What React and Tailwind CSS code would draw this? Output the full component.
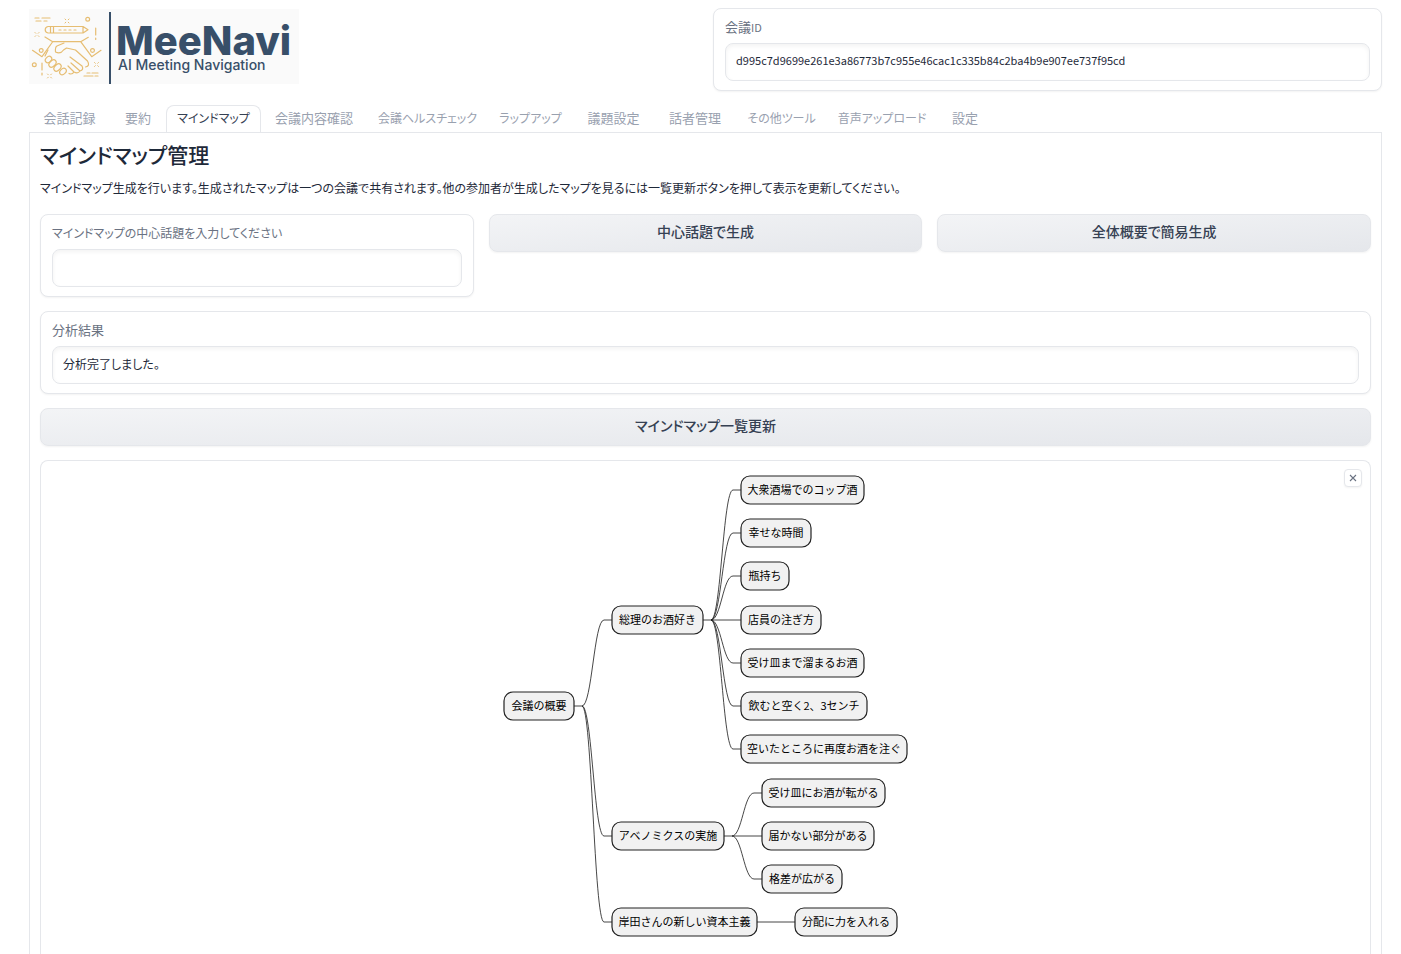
const TABS = [
  ["会話記録", "w-[81px] text-[13px]"],
  ["要約", "w-[56px] text-[13px]"],
  ["マインドマップ", "w-[95px] text-[12px]"],
  ["会議内容確認", "w-[106px] text-[13px]"],
  ["会議ヘルスチェック", "w-[121px] text-[12px]"],
  ["ラップアップ", "w-[85px] text-[12px]"],
  ["議題設定", "w-[81px] text-[13px]"],
  ["話者管理", "w-[82px] text-[13px]"],
  ["その他ツール", "w-[91px] text-[12px]"],
  ["音声アップロード", "w-[110px] text-[12px]"],
  ["設定", "w-[56px] text-[13px]"],
];

// [label, x, centre y, width]
const NODES = [
  ["会議の概要", 4, 236, 70],
  ["総理のお酒好き", 112, 150, 91],
  ["アベノミクスの実施", 112, 366, 112],
  ["岸田さんの新しい資本主義", 112, 452, 145],
  ["大衆酒場でのコップ酒", 241, 20, 123],
  ["幸せな時間", 241, 63, 70],
  ["瓶持ち", 241, 106, 48],
  ["店員の注ぎ方", 241, 150, 80],
  ["受け皿まで溜まるお酒", 241, 193, 123],
  ["飲むと空く2、3センチ", 241, 236, 126],
  ["空いたところに再度お酒を注ぐ", 241, 279, 166],
  ["受け皿にお酒が転がる", 262, 323, 123],
  ["届かない部分がある", 262, 366, 112],
  ["格差が広がる", 262, 409, 80],
  ["分配に力を入れる", 295, 452, 102],
];

// [parent right edge, parent y, child left edge, child y]
const LINKS = [
  [74, 236, 112, 150],
  [74, 236, 112, 366],
  [74, 236, 112, 452],
  [203, 150, 241, 20],
  [203, 150, 241, 63],
  [203, 150, 241, 106],
  [203, 150, 241, 150],
  [203, 150, 241, 193],
  [203, 150, 241, 236],
  [203, 150, 241, 279],
  [224, 366, 262, 323],
  [224, 366, 262, 366],
  [224, 366, 262, 409],
  [257, 452, 295, 452],
];

// One short stub leaves each branching parent, up to the point where its curves fan out.
const STUBS = [...new Map(LINKS.map(([x, y]) => [`${x}-${y}`, [x, y]])).values()];

const SPARKLES = [
  [67, 21],
  [37, 34.5],
  [49.5, 76],
  [96.5, 64.5],
];

function Logo() {
  return (
    <svg width="270" height="77" viewBox="29 8 270 77" role="img" aria-label="MeeNavi">
      <rect x="29" y="9" width="270" height="75" fill="#fafafa" />
      <g fill="none" stroke="#e6bd72" strokeWidth="1.2" strokeLinecap="round" strokeLinejoin="round">
        <path d="M48 26.500H83l5 3.200-5 3.300H48q-2.800-.5-2.800-3.200t2.800-3.300zM50.500 26.500v6.500M53.500 26.500v6.500M83 26.500v6.500" />
        <path d="M59 30h20" strokeDasharray="2 3" />
        <path d="M45 37l7.700 4.700h28l7.600-4.400M52.500 42L42 56.700l-9.500-6.400M80.700 41.700l11 15 9.300-6.400" />
        <path d="M64 43l-7 3q-2 1-1.500 6 5 2.500 8-2l3-2 9 2 12 11q3 5-2 6" />
        <path d="M70 57l12 9q2 4-2 5l-9-8M80 71q-2 3-6 1l-6-6M74 72q-2 3-5 1.500" />
        <ellipse cx="48.500" cy="59.500" rx="3.600" ry="2.700" transform="rotate(-45 48.500 59.500)" />
        <ellipse cx="52.500" cy="63.500" rx="4.200" ry="2.800" transform="rotate(-45 52.500 63.500)" />
        <ellipse cx="57.500" cy="67.500" rx="4.200" ry="2.800" transform="rotate(-45 57.500 67.500)" />
        <ellipse cx="63" cy="71.500" rx="3.700" ry="2.700" transform="rotate(-45 63 71.500)" />
        <path d="M48 50l-3 6" />
        <circle cx="87.700" cy="19.300" r="1.900" />
        <circle cx="41.200" cy="50.500" r="1.900" />
        <circle cx="92.500" cy="50.500" r="1.900" />
        <circle cx="34.300" cy="64.700" r="1.900" />
        <path d="M35 18h4M42 18h8M36 21h5M44 21h3M84 76h9M95 76h3M87 73h3M92 73h6" />
        <path d="M95.700 28v7M95.700 38v1.500M42 63v7M42 73v2" />
        {SPARKLES.map(([x, y]) => (
          <path
            key={`${x}-${y}`}
            strokeWidth="1"
            d={`M${x - 2} ${y - 2}l.8.8M${x + 2} ${y - 2}l-.8.8M${x - 2} ${y + 2}l.8-.8M${x + 2} ${y + 2}l-.8-.8`}
          />
        ))}
      </g>
      <rect x="109" y="12" width="2" height="72" fill="#384f69" />
      <text x="116" y="55" fontSize="40" fontWeight="800" fill="#384f69" className="font-[Inter,sans-serif]">MeeNavi</text>
      <text x="118" y="70" fontSize="14" fontWeight="500" fill="#384f69" className="font-[Inter,sans-serif]">AI Meeting Navigation</text>
    </svg>
  );
}

function Field({ id, label, value, className = "", labelClass = "text-[13px]", inputClass = "text-[13px]" }) {
  return (
    <div className={`rounded-lg border border-gray-200 bg-white px-[11px] py-[9px] shadow-xs ${className}`}>
      <label htmlFor={id} className={`mb-2 block leading-[17px] text-gray-500 ${labelClass}`}>{label}</label>
      <input
        id={id}
        type="text"
        defaultValue={value}
        className={`block h-[38px] w-full rounded-lg border border-gray-200 bg-white px-[10px] pb-1 text-gray-800 shadow-[inset_0_2px_4px_0_rgba(0,0,0,0.05)] outline-none ${inputClass}`}
      />
    </div>
  );
}

function ActionButton({ children }) {
  return (
    <button
      type="button"
      className="h-[38px] w-full rounded-lg border border-gray-200 bg-linear-to-br from-gray-100 to-gray-200 pb-[5px] text-sm font-medium text-gray-700 shadow-xs"
    >
      {children}
    </button>
  );
}

function linkPath([x1, y1, x2, y2]) {
  const a = x1 + 8;
  const b = x2 - 8;
  if (y1 === y2) return `M${a} ${y1}H${x2}`;
  return `M${a} ${y1}C${a + 10} ${y1} ${b - 10} ${y2} ${b} ${y2}H${x2}`;
}

function MindMap() {
  return (
    <svg
      width="411"
      height="484"
      viewBox="0 0 411 484"
      role="img"
      aria-label="マインドマップ"
      className="[font-feature-settings:normal]"
    >
      <g fill="none" stroke="#181818" strokeWidth="0.8">
        {STUBS.map(([x, y]) => (
          <path key={`${x}-${y}`} d={`M${x} ${y}h8`} />
        ))}
        {LINKS.map((link) => (
          <path key={link.join("-")} d={linkPath(link)} />
        ))}
      </g>
      {NODES.map(([label, x, y, width]) => (
        <g key={label}>
          <rect x={x} y={y - 14} width={width} height="28" rx="9" fill="#f1f1f1" stroke="#222" strokeWidth="1.2" />
          <text x={x + width / 2} y={y + 4} fontSize="11" textAnchor="middle" fill="#000">{label}</text>
        </g>
      ))}
    </svg>
  );
}

export default function App() {
  return (
    <div className="flex min-h-screen flex-col bg-white pt-2 pr-[19px] pl-[29px] font-['Noto_Sans_CJK_JP',sans-serif] text-[13px] text-gray-800">
      <header className="grid grid-cols-2 gap-[15px]">
        <Logo />
        <Field
          id="meeting-id"
          label={<>会議<span className="text-[11px] leading-none">ID</span></>}
          value="d995c7d9699e261e3a86773b7c955e46cac1c335b84c2ba4b9e907ee737f95cd"
          inputClass="text-[11px]"
        />
      </header>

      <nav role="tablist" className="mt-[14px] -mb-px flex [font-feature-settings:'palt']">
        {TABS.map(([label, style]) => {
          const active = label === "マインドマップ";
          return (
            <button
              key={label}
              type="button"
              role="tab"
              aria-selected={active}
              className={`${style} h-7 shrink-0 rounded-t-lg border pb-[2px] text-center whitespace-nowrap ${
                active ? "border-gray-200 border-b-white bg-white text-gray-700" : "border-transparent text-gray-400"
              }`}
            >
              {label}
            </button>
          );
        })}
      </nav>

      <main className="flex flex-1 flex-col border border-b-0 border-gray-200 px-[10px] pt-[5px] [font-feature-settings:'palt']">
        <h1 className="text-[21px] leading-8 font-medium">マインドマップ管理</h1>
        <p className="mt-[7px] text-[12px] leading-[22px]">
          マインドマップ生成を行います。生成されたマップは一つの会議で共有されます。他の参加者が生成したマップを見るには一覧更新ボタンを押して表示を更新してください。
        </p>

        <div className="mt-[15px] grid grid-cols-3 items-start gap-[15px]">
          <Field id="topic" label="マインドマップの中心話題を入力してください" value="" labelClass="text-[12px]" />
          <ActionButton>中心話題で生成</ActionButton>
          <ActionButton>全体概要で簡易生成</ActionButton>
        </div>

        <Field id="result" label="分析結果" value="分析完了しました。" className="mt-[14px]" inputClass="text-[12px]" />

        <div className="mt-[14px]">
          <ActionButton>マインドマップ一覧更新</ActionButton>
        </div>

        <section className="relative mt-[14px] flex flex-1 justify-center rounded-t-lg border border-b-0 border-gray-200 pt-[9px]">
          <MindMap />
          <button
            type="button"
            aria-label="閉じる"
            className="absolute top-2 right-2 flex size-[18px] items-center justify-center rounded-sm border border-gray-200 bg-white text-gray-500 shadow-xs"
          >
            <svg width="8" height="8" viewBox="0 0 8 8" stroke="currentColor" strokeWidth="1.1">
              <path d="M1 1l6 6M7 1L1 7" />
            </svg>
          </button>
        </section>
      </main>
    </div>
  );
}
